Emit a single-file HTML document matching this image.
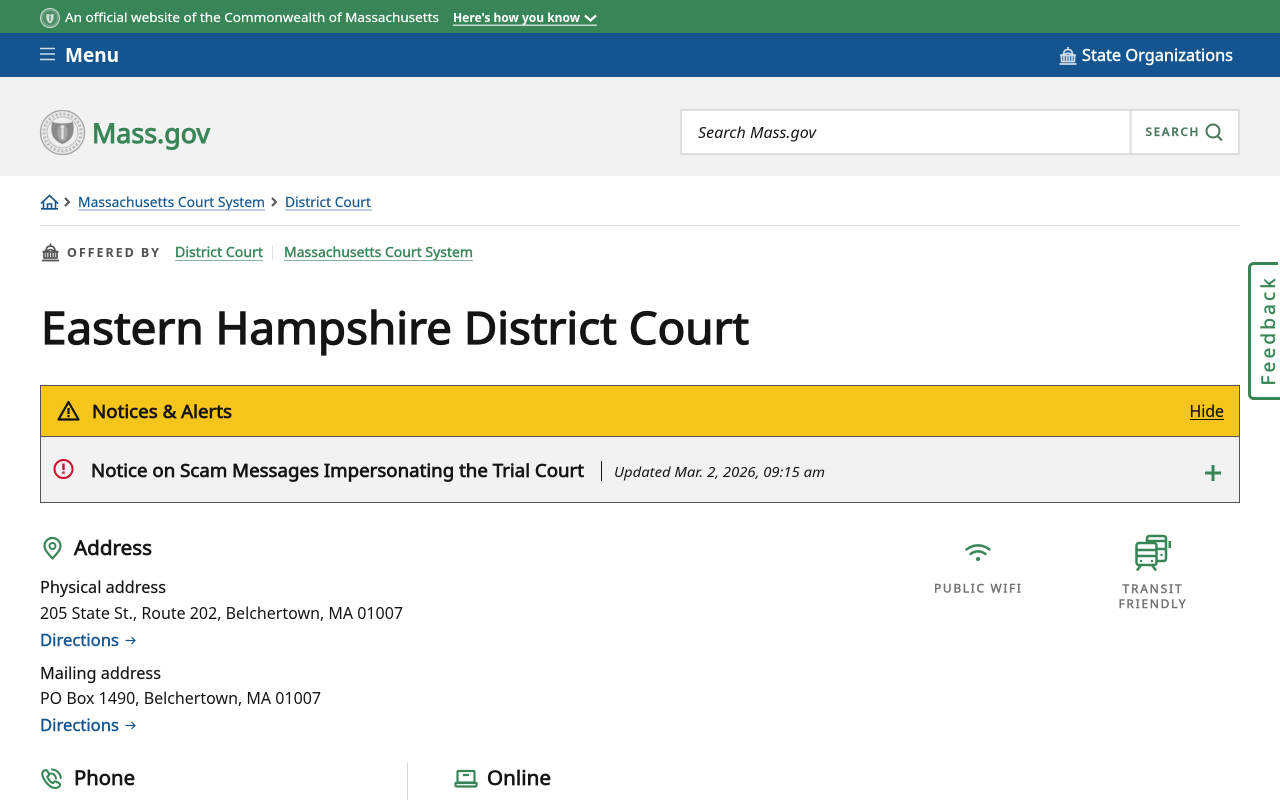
<!DOCTYPE html>
<html lang="en">
<head>
<meta charset="utf-8">
<title>Eastern Hampshire District Court | Mass.gov</title>
<style>
html,body{margin:0;padding:0;background:#fff;width:1280px;height:800px;overflow:hidden}
svg{display:block}
text{font-family:"Noto Sans","Noto Sans CJK JP","Liberation Sans",sans-serif;white-space:pre}
.s1{stroke-width:.18px;paint-order:stroke}
.s2{stroke-width:.4px;paint-order:stroke}
.s3{stroke-width:.7px;paint-order:stroke}
.s4{stroke-width:1.300px;paint-order:stroke}
.s5{stroke-width:1px;paint-order:stroke}
</style>
</head>
<body>
<svg xmlns="http://www.w3.org/2000/svg" width="1280" height="800" viewBox="0 0 1280 800">
<defs>
<g id="cap" fill="none" stroke-linejoin="round">
<path d="M.5 17.500h17M2 15h14M2.500 15V9h13v6M5 10v4M7.700 10v4M10.300 10v4M13 10v4M1 9 9 6.500 17 9M4.500 7.500C4.800 4.500 6.500 3 9 3s4.200 1.500 4.500 4.500M9 3V.5" stroke-width="1.700"/>
</g>
</defs>

<rect width="1280" height="33" fill="#388557"/>
<rect y="33" width="1280" height="44" fill="#14558f"/>
<rect y="77" width="1280" height="99" fill="#f2f2f2"/>

<circle cx="50" cy="18" r="9.500" fill="#6fa486" stroke="#c9dccf" stroke-width="1"/>
<circle cx="50" cy="18" r="7" fill="#4f9069"/>
<path d="M46.500 14c2.300.6 4.700.6 7 0 .4 3.800.2 7.300-3.500 9.500-3.700-2.200-3.900-5.700-3.500-9.500z" fill="#cfe0d5"/>
<rect x="49.200" y="15.500" width="1.600" height="5.500" fill="#6f9680"/>
<text class="s1" stroke="#fff" x="65" y="22" font-size="13" fill="#fff" textLength="374" lengthAdjust="spacingAndGlyphs">An official website of the Commonwealth of Massachusetts</text>
<text x="453" y="22" font-size="12.500" font-weight="700" fill="#fff" textLength="127" lengthAdjust="spacingAndGlyphs">Here's how you know</text>
<path d="M585 15.500l5.500 5 5.500-5" fill="none" stroke="#fff" stroke-width="2.200"/>
<rect x="453" y="24.500" width="144" height="1.500" fill="#c8dccf"/>

<path d="M40 48.500h15M40 54h15M40 59.500h15" stroke="#d0dde9" stroke-width="1.500"/>
<text x="65" y="62" font-size="20" font-weight="700" fill="#fff" textLength="54" lengthAdjust="spacingAndGlyphs">Menu</text>
<g transform="translate(1059,46.500)" stroke="#cfdde9"><use href="#cap"/></g>
<text class="s2" stroke="#fff" x="1082" y="61" font-size="16" fill="#fff" textLength="151" lengthAdjust="spacingAndGlyphs">State Organizations</text>

<circle cx="62.500" cy="132.500" r="22" fill="#e9e9e9" stroke="#a5a5a5" stroke-width="1.300"/>
<circle cx="62.500" cy="132.500" r="18.500" fill="none" stroke="#bcbcbc" stroke-width="3" stroke-dasharray="2 2"/>
<circle cx="62.500" cy="132.500" r="15.500" fill="#eeeeee" stroke="#b5b5b5" stroke-width=".8"/>
<path d="M52 122c7 2 14 2 21 0 1 5.500 1 10.500-1 14.500-2 3.500-5.500 6-9.500 7.500-4-1.500-7.500-4-9.500-7.500-2-4-2-9-1-14.500z" fill="#8a8a8a"/>
<path d="M62.500 124.500c3 0 5 3 5 8s-1.800 9-5 9-5-4-5-9 2-8 5-8z" fill="#a6a6a6"/>
<circle cx="62.500" cy="127" r="1.800" fill="#e4e4e4"/>
<rect x="61.300" y="129" width="2.400" height="10" fill="#e0e0e0"/>
<text class="s5" stroke="#388557" x="92" y="143" font-size="27" fill="#388557" textLength="118" lengthAdjust="spacingAndGlyphs">Mass.gov</text>

<rect x="681" y="110" width="558" height="44" fill="#fff" stroke="#ddd" stroke-width="2"/>
<path d="M1130.500 110v44" stroke="#ddd" stroke-width="2"/>
<text x="698" y="138" font-size="15" font-style="italic" fill="#141414" textLength="118" lengthAdjust="spacingAndGlyphs">Search Mass.gov</text>
<text class="s1" stroke="#47785b" x="1145.500" y="136" font-size="12" font-weight="600" fill="#47785b" textLength="53">SEARCH</text>
<circle cx="1213" cy="131" r="6.500" fill="none" stroke="#47785b" stroke-width="2"/>
<path d="M1217.500 136l4.500 4.500" stroke="#47785b" stroke-width="2"/>

<path d="M41 203.500 49.500 195.500 58 203.500M43.500 201.500v7.500h12v-7.500M41 208.800h17M47.500 208.500v-4.500h4v4.500" fill="none" stroke="#14558f" stroke-width="1.600"/>
<path d="M65 198l4 4-4 4" fill="none" stroke="#535353" stroke-width="2"/>
<text class="s1" stroke="#14558f" x="78" y="207" font-size="13.500" fill="#14558f" textLength="187" lengthAdjust="spacingAndGlyphs">Massachusetts Court System</text>
<rect x="78" y="209.500" width="187" height="1" fill="#7f9fbb"/>
<path d="M272 198l4 4-4 4" fill="none" stroke="#535353" stroke-width="2"/>
<text class="s1" stroke="#14558f" x="285" y="207" font-size="13.500" fill="#14558f" textLength="86" lengthAdjust="spacingAndGlyphs">District Court</text>
<rect x="285" y="209.500" width="87" height="1" fill="#7f9fbb"/>
<rect x="40" y="225" width="1200" height="1" fill="#ddd"/>

<g transform="translate(41.500,243)" stroke="#535353"><use href="#cap"/></g>
<text x="67" y="257" font-size="12.500" font-weight="700" fill="#535353" textLength="92">OFFERED BY</text>
<text class="s2" stroke="#388557" x="175" y="257" font-size="13.500" fill="#388557" textLength="88" lengthAdjust="spacingAndGlyphs">District Court</text>
<rect x="175" y="260" width="88" height="1" fill="#88b69a"/>
<rect x="272" y="245" width="1" height="15" fill="#e3e3e3"/>
<text class="s2" stroke="#388557" x="284" y="257" font-size="13.500" fill="#388557" textLength="189" lengthAdjust="spacingAndGlyphs">Massachusetts Court System</text>
<rect x="284" y="260" width="189" height="1" fill="#88b69a"/>

<text class="s4" stroke="#141414" x="41" y="344" font-size="45" fill="#141414" textLength="708" lengthAdjust="spacingAndGlyphs">Eastern Hampshire District Court</text>

<path d="M1278 263.500h-24c-2.700 0-4.500 1.800-4.500 4.500v126c0 2.700 1.800 4.500 4.500 4.500h26" fill="#fff" stroke="#388557" stroke-width="3"/>
<text class="s2" stroke="#388557" transform="translate(1275,385.500) rotate(-90)" x="0" y="0" font-size="19" fill="#388557" textLength="107">Feedback</text>

<rect x="40.500" y="385.500" width="1199" height="117" fill="#f2f2f2" stroke="#535353"/>
<rect x="41" y="386" width="1198" height="50" fill="#f6c51b"/>
<rect x="40" y="436" width="1200" height="1" fill="#535353"/>
<path d="M68.500 402 78.500 419.500H58.500z" fill="none" stroke="#141414" stroke-width="2.200" stroke-linejoin="round"/>
<path d="M68.500 408v6M68.500 415v2.200" stroke="#141414" stroke-width="2.200"/>
<text class="s3" stroke="#141414" x="92" y="418" font-size="18" fill="#141414" textLength="140" lengthAdjust="spacingAndGlyphs">Notices &amp; Alerts</text>
<text class="s1" stroke="#141414" x="1189.500" y="417" font-size="16" fill="#141414" textLength="34.500" lengthAdjust="spacingAndGlyphs">Hide</text>
<rect x="1190" y="419" width="34" height="1" fill="#141414"/>

<circle cx="63.500" cy="469" r="9" fill="none" stroke="#cd0d2d" stroke-width="2"/>
<path d="M63.500 463.500v6.500M63.500 471.500v2.200" stroke="#cd0d2d" stroke-width="2.400"/>
<text class="s3" stroke="#141414" x="91" y="477" font-size="18" fill="#141414" textLength="493" lengthAdjust="spacingAndGlyphs">Notice on Scam Messages Impersonating the Trial Court</text>
<rect x="601" y="461" width="1" height="20" fill="#141414"/>
<text x="614" y="477" font-size="14" font-style="italic" fill="#141414" textLength="211" lengthAdjust="spacingAndGlyphs">Updated Mar. 2, 2026, 09:15 am</text>
<path d="M1205 473h16M1213 465v16" stroke="#388557" stroke-width="3"/>

<path d="M52.500 558.500c-4-4.500-8-8.500-8-12.500a8 8 0 0 1 16 0c0 4-4 8-8 12.500z" fill="none" stroke="#388557" stroke-width="2.200" stroke-linejoin="round"/>
<circle cx="52.500" cy="546" r="3" fill="none" stroke="#388557" stroke-width="2"/>
<text class="s3" stroke="#141414" x="74" y="555" font-size="20" fill="#141414" textLength="78" lengthAdjust="spacingAndGlyphs">Address</text>
<text class="s1" stroke="#141414" x="40" y="593" font-size="16" fill="#141414" textLength="126" lengthAdjust="spacingAndGlyphs">Physical address</text>
<text x="40" y="619" font-size="16" fill="#141414" textLength="363" lengthAdjust="spacingAndGlyphs">205 State St., Route 202, Belchertown, MA 01007</text>
<text class="s2" stroke="#14558f" x="40" y="646" font-size="16" fill="#14558f" textLength="79" lengthAdjust="spacingAndGlyphs">Directions</text>
<path d="M125.500 640.500h9.500M131.500 637l3.500 3.500-3.500 3.500" fill="none" stroke="#14558f" stroke-width="1.200"/>
<text class="s1" stroke="#141414" x="40" y="679" font-size="16" fill="#141414" textLength="121" lengthAdjust="spacingAndGlyphs">Mailing address</text>
<text x="40" y="704" font-size="16" fill="#141414" textLength="281" lengthAdjust="spacingAndGlyphs">PO Box 1490, Belchertown, MA 01007</text>
<text class="s2" stroke="#14558f" x="40" y="731" font-size="16" fill="#14558f" textLength="79" lengthAdjust="spacingAndGlyphs">Directions</text>
<path d="M125.500 725.500h9.500M131.500 722l3.500 3.500-3.500 3.500" fill="none" stroke="#14558f" stroke-width="1.200"/>

<path d="M966.500 549.500c7-5.500 16-5.500 23 0M970.500 554c4.500-3.500 10.500-3.500 15 0" fill="none" stroke="#388557" stroke-width="2.400" stroke-linecap="round"/>
<circle cx="978" cy="559" r="2" fill="#388557"/>
<text class="s2" stroke="#707070" x="934" y="592.500" font-size="12" fill="#707070" textLength="87">PUBLIC WIFI</text>

<g fill="none" stroke="#388557" stroke-width="2.500" stroke-linejoin="round">
<path d="M1147 543v-4.500c0-1.500 1-2.500 2.500-2.500h14c1.500 0 2.500 1 2.500 2.500v20c0 1.500-1 2.500-2.500 2.500h-6"/>
<path d="M1148 541h18"/>
<path d="M1157 549h9"/>
<rect x="1136.500" y="543" width="20" height="22" rx="2.500"/>
<path d="M1136.500 550h20M1136.500 556h20"/>
<path d="M1141 565l-4 5.500M1152 565l4 5.500"/>
</g>
<rect x="1168.500" y="541" width="2.500" height="7" fill="#388557"/>
<circle cx="1141" cy="561" r="1.200" fill="#388557"/>
<circle cx="1152" cy="561" r="1.200" fill="#388557"/>
<circle cx="1161.500" cy="555" r="1.200" fill="#388557"/>
<text class="s2" stroke="#707070" x="1122.500" y="593" font-size="12" fill="#707070" textLength="59">TRANSIT</text>
<text class="s2" stroke="#707070" x="1118.500" y="608" font-size="12" fill="#707070" textLength="67">FRIENDLY</text>

<g fill="none" stroke="#388557" stroke-width="2.100" stroke-linecap="round" stroke-linejoin="round">
<path d="M47 770.500c-1.500-.5-3-.2-4 1-1.500 2-.5 6 2.500 10s6.500 6.500 9.500 6.500c2.500 0 4.500-1 5-3 .3-1-.5-1.500-1.200-2l-3-1.500c-.8-.4-1.500 0-2 .7l-.8 1c-2-.5-5-4-5.800-6.500l1.300-1c.7-.6.9-1.200.6-2z"/>
<path d="M51 773.500c2.800.2 4.800 2.300 5 5M52 769.500c5 .3 8.300 3.800 8.800 8.500"/>
</g>
<text class="s3" stroke="#141414" x="74" y="785" font-size="20" fill="#141414" textLength="61" lengthAdjust="spacingAndGlyphs">Phone</text>
<rect x="407" y="763" width="1" height="37" fill="#d6d6d6"/>
<g fill="none" stroke="#388557" stroke-width="2.200" stroke-linejoin="round">
<rect x="457.500" y="771" width="17" height="11.500" rx="1"/>
<path d="M455.500 783h21v2c0 1-.5 1.500-1.500 1.500h-18c-1 0-1.500-.5-1.500-1.500z"/>
<path d="M463 775h6"/>
</g>
<text class="s3" stroke="#141414" x="487" y="785" font-size="20" fill="#141414" textLength="64" lengthAdjust="spacingAndGlyphs">Online</text>
</svg>
</body>
</html>
